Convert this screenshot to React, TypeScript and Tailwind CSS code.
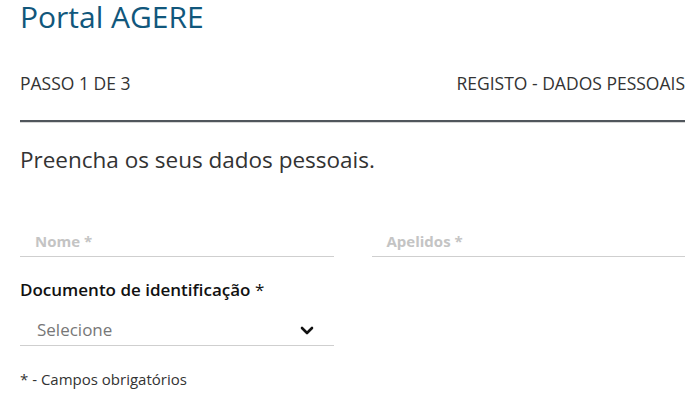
import React from "react"

function Chevron() {
  return (
    <svg width="14" height="9" viewBox="0 0 14 9" className="shrink-0">
      <polyline points="2,2 7,7 12,2" fill="none" stroke="#111" strokeWidth="2.6" strokeLinecap="round" strokeLinejoin="round" />
    </svg>
  )
}

export default function App() {
  return (
    <div className="min-h-[403px] bg-white pl-5 pr-3 font-['Open_Sans',sans-serif] text-[#333]">
      {/* Header */}
      <h1 className="text-[30px] leading-[34px] text-[#11577c]">Portal AGERE</h1>

      {/* Step bar */}
      <div className="mt-[37px] flex items-center justify-between border-b-2 border-[#50565c] pb-[25px] text-[17.5px] leading-[24px] text-[#333] shadow-[0_1px_0_#d6d6d6]">
        <span>PASSO 1 DE 3</span>
        <span>REGISTO - DADOS PESSOAIS</span>
      </div>

      <p className="mt-[23px] text-[22.5px] leading-[30px] text-[#333]">Preencha os seus dados pessoais.</p>

      {/* Name fields */}
      <div className="mt-[56px] grid grid-cols-2 gap-[38px]">
        <div className="border-b border-[#cfcfcf] pb-[5px] pl-[15px] text-[15px] font-bold leading-[20px] text-[#c4c4c4]">
          Nome *
        </div>
        <div className="border-b border-[#cfcfcf] pb-[5px] pl-[15px] text-[15px] font-bold leading-[20px] text-[#c4c4c4]">
          Apelidos *
        </div>
      </div>

      {/* Document */}
      <div className="mt-[21px] text-[17px] font-semibold leading-[24px] text-[#111]">
        Documento de identificação <span className="font-normal">*</span>
      </div>
      <div className="mt-[16px] grid grid-cols-2 gap-[38px]">
        <div className="flex items-center justify-between border-b border-[#cfcfcf] pb-[3px] pl-[17px] pr-[20px]">
          <span className="text-[17px] leading-[24px] text-[#777]">Selecione</span>
          <Chevron />
        </div>
      </div>

      <p className="mt-[23px] text-[15px] leading-[20px] text-[#333]">* - Campos obrigatórios</p>
    </div>
  )
}
